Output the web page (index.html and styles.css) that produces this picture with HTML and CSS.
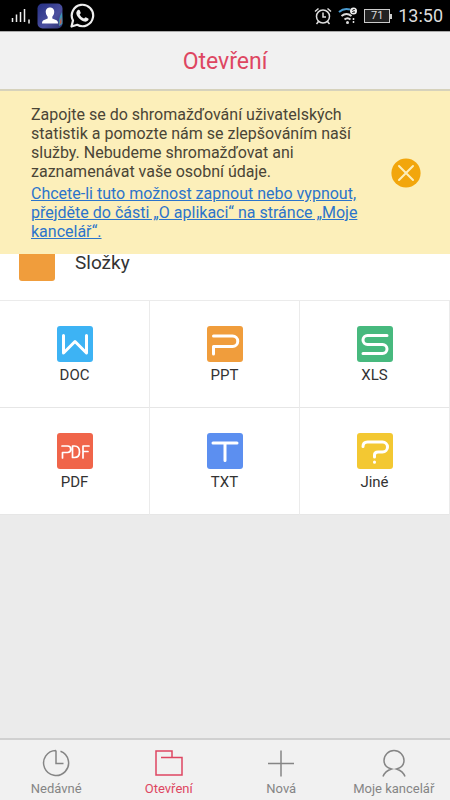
FILE: index.html
```html
<!DOCTYPE html>
<html lang="cs">
<head>
<meta charset="utf-8">
<meta name="viewport" content="width=device-width, initial-scale=1">
<title>Otevření</title>
<link rel="stylesheet" href="styles.css">
</head>
<body>
<div class="app">
  <div class="status">
    <div class="status-group">
      <svg width="20" height="18" viewBox="0 0 20 18" fill="none" stroke="#eee" stroke-width="1.5"><path d="M1.500 15v-4M5.500 15V7.500M9.500 15V5M13.500 15V2"/><path d="M18 12.500v4"/></svg>
      <svg width="26" height="26" viewBox="0 0 26 26"><defs><linearGradient id="sky" x1="0" y1="0" x2="1" y2="1"><stop stop-color="#242f83"/><stop offset=".6" stop-color="#4c509f"/><stop offset="1" stop-color="#2d3470"/></linearGradient></defs><rect x=".5" y=".5" width="25" height="25" rx="5" fill="url(#sky)"/><path d="M25 9q-4 7-3 14l2-1q2-1 1.500-4z" fill="#3f94b4"/><path d="M24.500 14q-2 4-2 8l2-2z" fill="#c45c4b"/><path d="M13 4.500c3 0 4.500 2.200 4.200 5-.2 2-1.200 3.500-1.900 4.300v1.700l4.200 1.700c1 .5 1.500 1.500 1.500 3.300H5c0-1.800.5-2.800 1.500-3.300l4.200-1.700v-1.700c-.7-.8-1.700-2.300-1.900-4.300-.3-2.800 1.200-5 4.200-5z" fill="#fff"/></svg>
      <svg width="26" height="26" viewBox="0 0 26 26"><path d="M2.500 23.500l1.500-6a10.700 10.700 0 1 1 4.200 4.300z" fill="none" stroke="#eee" stroke-width="2.200" stroke-linejoin="round"/><path d="M9 7c.6-.4 1.400-.3 1.700.3l1 2.400c.2.600-.8 1.500-1 1.900.8 1.900 2.300 3.200 4.300 4 .5-.3 1.300-1.600 1.800-1.400l2.400 1.200c.6.300.4 1.500-.2 2.200-1.600 1.700-4.300 1.200-7-.6-2.500-1.700-4.600-4.400-4.700-6.700 0-1.400.7-2.600 1.700-3.300z" fill="#eee"/></svg>
    </div>
    <div class="status-group">
      <svg width="18" height="18" viewBox="0 0 18 18" fill="none" stroke="#ddd" stroke-width="1.500"><circle cx="9" cy="9.500" r="6.500"/><path d="M9 5.500v4.500h3M1 4.500L4.500 1.500M17 4.500L13.500 1.500M4.500 14.500L2.500 17M13.500 14.500l2 2.500"/></svg>
      <svg width="20" height="18" viewBox="0 0 20 18" fill="none" stroke="#ddd" stroke-width="2"><path d="M1 5q5-4.500 11-2.500" stroke="#4a9bd0"/><path d="M3.500 9q5-4 10 0M6.500 12.500q3-2.500 6 0"/><circle cx="9.500" cy="15.500" r="1.500" fill="#ddd" stroke="none"/><path d="M15.500 11v2M15.500 14v2" stroke-width="1.500"/><circle cx="15.500" cy="4" r="3.500" fill="#eee" stroke="none"/><path d="M17 2.500h-2q-1 1.500 0 1.500 2 0 1.500 1.500h-2.500" stroke="#222" stroke-width=".8"/></svg>
      <div class="battery">71</div>
      <time class="clock">13:50</time>
    </div>
  </div>

  <header class="header"><h1>Otevření</h1></header>

  <main class="content">
    <section class="notice">
      <div class="notice-text">
        <p>Zapojte se do shromažďování uživatelských statistik a pomozte nám se zlepšováním naší služby. Nebudeme shromažďovat ani zaznamenávat vaše osobní údaje.</p>
        <a href="#office">Chcete-li tuto možnost zapnout nebo vypnout, přejděte do části „O aplikaci“ na stránce „Moje kancelář“.</a>
      </div>
      <button class="close" type="button" aria-label="Zavřít"><svg width="30" height="30" viewBox="0 0 30 30"><circle cx="15" cy="15" r="14.600" fill="#f2a60c"/><path d="M8 8l14 14M22 8L8 22" stroke="#fdeebb" stroke-width="2" stroke-linecap="round"/></svg></button>
    </section>

    <a class="folders" href="#folders"><span class="folder-icon"></span>Složky</a>

    <nav class="types">
      <a href="#doc"><svg class="tile" viewBox="0 0 36 36"><rect width="36" height="36" rx="3" fill="#3db3f4"/><path d="M6.500 9.500v17.500L18 15.500l11.500 11.500V9.500"/></svg>DOC</a>
      <a href="#ppt"><svg class="tile" viewBox="0 0 36 36"><rect width="36" height="36" rx="3" fill="#f09d3c"/><path d="M6.500 10h19a5 5 0 0 1 0 10.500H6.500V28"/></svg>PPT</a>
      <a href="#xls"><svg class="tile" viewBox="0 0 36 36"><rect width="36" height="36" rx="3" fill="#47b97e"/><path d="M30 9.500H10.500a4.500 4.500 0 0 0 0 9h15a4.500 4.500 0 0 1 0 9H6"/></svg>XLS</a>
      <a href="#pdf"><svg class="tile" viewBox="0 0 36 36"><rect width="36" height="36" rx="3" fill="#f0654a"/><path class="thin" d="M5 13h5.500a3 3 0 0 1 0 6.500H5.500V25M15.500 13v11.500h2q5 0 5-5.700T17.500 13zM32 13h-6v12M26 18.500h5"/></svg>PDF</a>
      <a href="#txt"><svg class="tile" viewBox="0 0 36 36"><rect width="36" height="36" rx="3" fill="#5c8ff0"/><path d="M6 10h24M18 10v17.500"/></svg>TXT</a>
      <a href="#other"><svg class="tile" viewBox="0 0 36 36"><rect width="36" height="36" rx="3" fill="#f3c832"/><path d="M6 13.500Q6 9 10.500 9h15a4.500 4.500 0 0 1 0 10H21q-3.500 0-3.500 3v2M17.500 29v.2"/></svg>Jiné</a>
    </nav>
  </main>

  <nav class="tabs">
    <a href="#recent"><svg viewBox="0 0 28 28"><path d="M14 1.500v13h7.500M14 1.500A12.500 12.500 0 1 0 18.500 2.300"/></svg>Nedávné</a>
    <a class="active" href="#open" aria-current="page"><svg viewBox="0 0 28 28"><path d="M6 8.500h21V26H1V2h16v6"/></svg>Otevření</a>
    <a href="#new"><svg viewBox="0 0 28 28"><path d="M14 1.500v26M1 14.500h26"/></svg>Nová</a>
    <a href="#office"><svg viewBox="0 0 28 28"><path d="M3 27.500q2-5.500 8.500-7.500-7.500-2-7.500-8.500a10 10 0 0 1 20 0q0 6.500-7.500 8.500 6.500 2 8.500 7.500"/></svg>Moje kancelář</a>
  </nav>
</div>
</body>
</html>
```
FILE: styles.css
```css
* { box-sizing: border-box; }

body {
  margin: 0;
  font-family: Roboto, "Liberation Sans", sans-serif;
  color: #333;
  background: #ebebeb;
}

a { color: inherit; text-decoration: none; }
h1, p { margin: 0; }
svg { display: block; }

.app {
  display: flex;
  flex-direction: column;
  min-height: 100vh;
}

.status {
  display: flex;
  justify-content: space-between;
  align-items: center;
  height: 31px;
  padding: 0 7px 0 11px;
  background: #000;
  color: #ddd;
}

.status-group { display: flex; align-items: center; gap: 6px; }

.battery {
  position: relative;
  width: 26px;
  margin-right: 2px;
  border: 1px solid #ccc;
  background: #222;
  font-size: 11px;
  line-height: 12px;
  text-align: center;
}

.battery::after {
  content: "";
  position: absolute;
  top: 4px;
  right: -3px;
  width: 2px;
  height: 5px;
  background: #ccc;
}

.clock { font-size: 18px; }

.header {
  height: 60px;
  border-top: 1px solid #aaa;
  border-bottom: 2px solid #d6d2bc;
  background: #f1f1f1;
  text-align: center;
}

.header h1 {
  font-size: 23px;
  font-weight: 400;
  line-height: 60px;
  color: #de4661;
}

.content { flex: 1; }

/* The notice lies over the top of the folder row. */
.notice {
  position: relative;
  z-index: 1;
  display: flex;
  justify-content: space-between;
  align-items: center;
  margin-bottom: -28px;
  padding: 14px 29px 13px 31px;
  background: #fcefba;
  font-size: 16px;
  line-height: 19px;
  color: #4a4536;
}

.notice-text { max-width: 340px; }

.notice-text a {
  display: block;
  margin-top: 3px;
  color: #2b74cb;
  text-decoration: underline;
}

.close {
  flex: none;
  padding: 0;
  border: 0;
  background: none;
}

.folders {
  display: flex;
  align-items: center;
  gap: 20px;
  height: 74px;
  padding: 0 19px;
  border-bottom: 1px solid #fff;
  background: #fff;
  font-size: 19px;
}

.folder-icon {
  width: 36px;
  height: 36px;
  border-radius: 3px;
  background: #f09d3c;
}

.types {
  display: grid;
  grid-template-columns: repeat(3, 1fr);
  border-top: 1px solid #ebebeb;
}

.types a {
  display: flex;
  flex-direction: column;
  align-items: center;
  gap: 4px;
  height: 107px;
  padding-top: 25px;
  border-right: 1px solid #ebebeb;
  border-bottom: 1px solid #e6e6e6;
  background: #fff;
  font-size: 15px;
  line-height: 18px;
}

.tile { width: 36px; height: 36px; }

.tile path {
  fill: none;
  stroke: #fff;
  stroke-width: 3;
  stroke-linecap: round;
  stroke-linejoin: round;
}

.tile .thin { stroke-width: 1.7; }

.tabs {
  display: grid;
  grid-template-columns: repeat(4, 1fr);
  height: 62px;
  border-top: 2px solid #d0d0d0;
  background: #f1f1f1;
  font-size: 13px;
  line-height: 16px;
  color: #858585;
}

.tabs a {
  display: flex;
  flex-direction: column;
  align-items: center;
  gap: 4px;
  padding-top: 9px;
}

.tabs svg {
  width: 28px;
  height: 28px;
  fill: none;
  stroke: currentColor;
  stroke-width: 1.5;
}

.tabs .active { color: #de4661; }
```
